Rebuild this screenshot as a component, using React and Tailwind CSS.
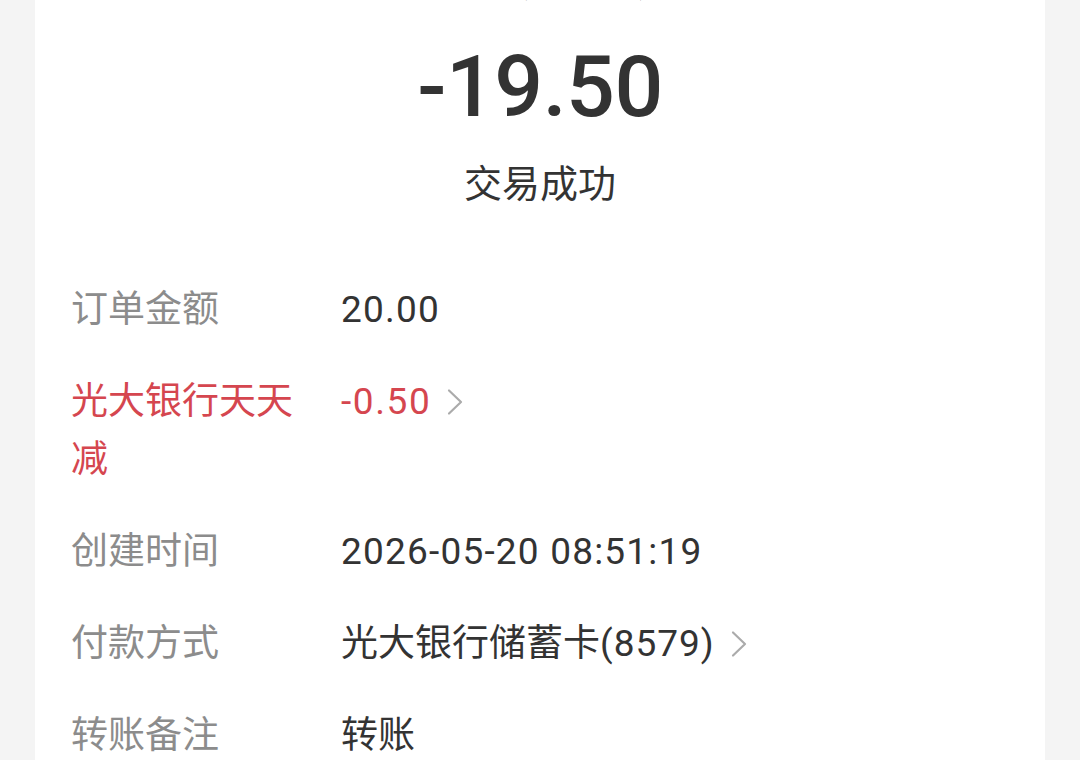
export default function App() {
  const font = { fontFamily: 'Roboto, "Noto Sans CJK SC", sans-serif' };
  const rows = [
    { label: "订单金额", value: <span className="tracking-[1.2px]">20.00</span> },
    { label: "光大银行天天减", value: <span className="tracking-[1.6px]">-0.50</span>, red: true, chevron: true },
    { label: "创建时间", value: <span className="tracking-[1.2px]">2026-05-20 08:51:19</span> },
    { label: "付款方式", value: <span>光大银行储蓄卡<span className="tracking-[1px]">(8579)</span></span>, chevron: true },
    { label: "转账备注", value: <span>转账</span> },
  ];
  const Chevron = () => (
    <svg width="18" height="28" viewBox="0 0 18 28" className="ml-[15px] shrink-0">
      <path d="M3 2.5 L15 14 L3 25.5" fill="none" stroke="#ababab" strokeWidth="2.2" strokeLinecap="round" strokeLinejoin="round" />
    </svg>
  );
  return (
    <div className="w-[1080px] h-[760px] overflow-hidden bg-[#f4f4f4]" style={font}>
      <div className="mx-[35px] h-full bg-white">
        <div className="flex flex-col items-center">
          <div className="mt-[-46px] h-[52px] text-[37px] leading-[52px] text-[#333] pl-[50px]">张(王小明)</div>
          <div className="mt-[26px] text-[86px] leading-[110px] font-medium text-[#333] tracking-[-0.5px]">-19.50</div>
          <div className="mt-[17px] text-[38px] leading-[50px] text-[#333]">交易成功</div>
        </div>
        <div className="mt-[72px] pl-[36px] flex flex-col gap-[34px]">
          {rows.map((r) => (
            <div key={r.label} className="grid grid-cols-[270px_1fr] text-[37px] leading-[58px]">
              <div className={`w-[240px] ${r.red ? "text-[#d5464f]" : "text-[#8c8c8c]"}`}>{r.label}</div>
              <div className={`flex items-start ${r.red ? "text-[#d5464f]" : "text-[#333]"}`}>
                {r.value}
                {r.chevron && <div className="h-[58px] flex items-center"><Chevron /></div>}
              </div>
            </div>
          ))}
        </div>
      </div>
    </div>
  );
}
